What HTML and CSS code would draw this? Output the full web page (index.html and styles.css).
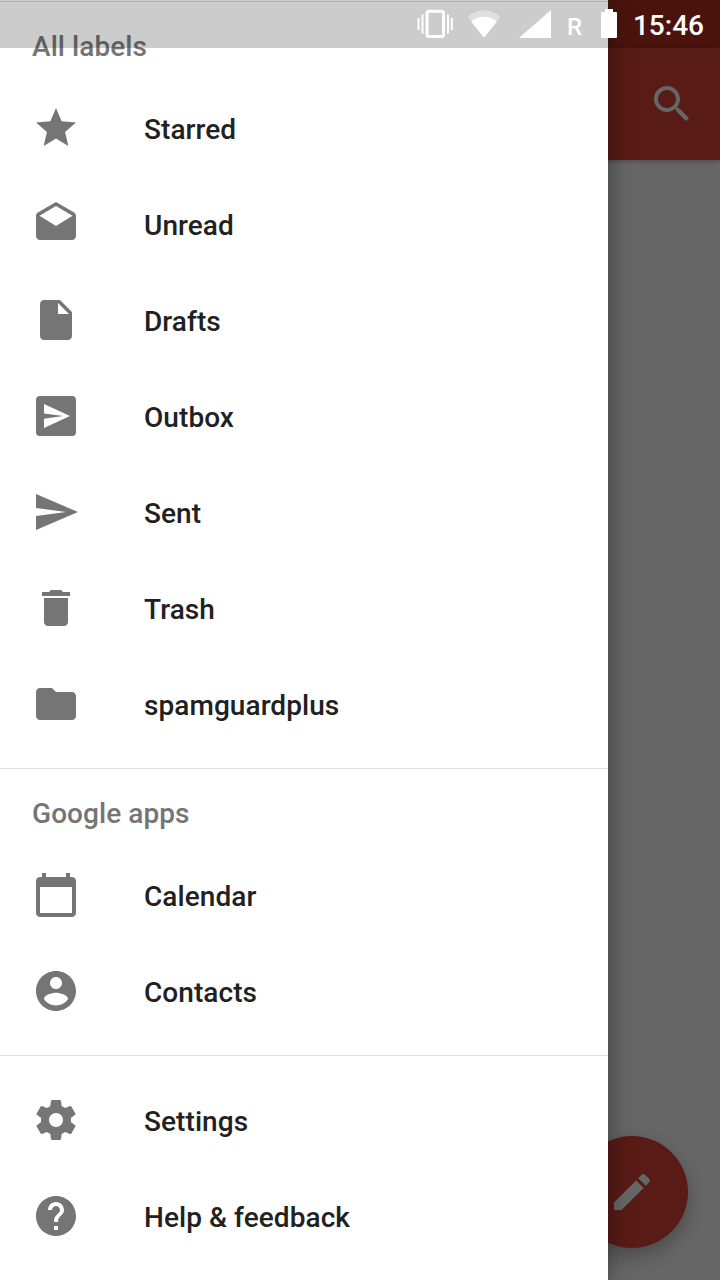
FILE: index.html
```html
<!DOCTYPE html>
<html lang="en">
<head>
	<meta charset="UTF-8">
	<title>Gmail</title>
	<link rel="stylesheet" href="styles.css">
</head>
<body>
	<div class="screen">
		<div class="app">
			<div class="app-status"></div>
			<div class="toolbar">
				<svg class="icon" viewBox="0 0 24 24"><path d="M15.5 14h-.79l-.28-.27C15.41 12.59 16 11.11 16 9.5 16 5.91 13.09 3 9.5 3S3 5.91 3 9.5 5.91 16 9.5 16c1.61 0 3.09-.59 4.23-1.57l.27.28v.79l5 4.99L20.49 19l-4.99-5zm-6 0C7.01 14 5 11.99 5 9.5S7.01 5 9.5 5 14 7.01 14 9.5 11.99 14 9.5 14z"/></svg>
			</div>
			<a href="#" class="fab">
				<svg class="icon" viewBox="0 0 24 24"><path d="M3 17.25V21h3.75L17.81 9.94l-3.75-3.75L3 17.25zM20.71 7.04c.39-.39.39-1.02 0-1.41l-2.34-2.34c-.39-.39-1.02-.39-1.41 0l-1.83 1.83 3.75 3.75 1.83-1.83z"/></svg>
			</a>
		</div>
		<div class="scrim"></div>

		<nav class="drawer">
			<section class="group first">
				<h2>All labels</h2>
				<a href="#" class="item">
					<svg class="icon" viewBox="0 0 24 24"><path d="M12 17.27L18.18 21l-1.64-7.03L22 9.24l-7.19-.61L12 2 9.19 8.63 2 9.24l5.46 4.73L5.82 21z"/></svg>
					<span>Starred</span>
				</a>
				<a href="#" class="item">
					<svg class="icon" viewBox="0 0 24 24"><path d="M21.99 8c0-.72-.37-1.35-.94-1.7L12 1 2.95 6.3C2.38 6.65 2 7.28 2 8v10c0 1.1.9 2 2 2h16c1.1 0 2-.9 2-2l-.01-10zM12 13L3.74 7.84 12 3l8.26 4.84L12 13z"/></svg>
					<span>Unread</span>
				</a>
				<a href="#" class="item">
					<svg class="icon" viewBox="0 0 24 24"><path d="M6 2c-1.1 0-1.99.9-1.99 2L4 20c0 1.1.89 2 1.99 2H18c1.1 0 2-.9 2-2V8l-6-6H6zm7 7V3.5L18.5 9H13z"/></svg>
					<span>Drafts</span>
				</a>
				<a href="#" class="item">
					<svg class="icon" viewBox="0 0 24 24"><path fill-rule="evenodd" d="M3.8 2h16.4c1 0 1.8.8 1.8 1.8v16.4c0 1-.8 1.8-1.8 1.8H3.8c-1 0-1.8-.8-1.8-1.8V3.8C2 2.8 2.8 2 3.8 2zM6 6v4.7l9.6 1.3L6 13.4V18l13-6z"/></svg>
					<span>Outbox</span>
				</a>
				<a href="#" class="item">
					<svg class="icon" viewBox="0 0 24 24"><path d="M2.01 21L23 12 2.01 3 2 10l15 2-15 2z"/></svg>
					<span>Sent</span>
				</a>
				<a href="#" class="item">
					<svg class="icon" viewBox="0 0 24 24"><path d="M6 19c0 1.1.9 2 2 2h8c1.1 0 2-.9 2-2V7H6v12zM19 4h-3.5l-1-1h-5l-1 1H5v2h14V4z"/></svg>
					<span>Trash</span>
				</a>
				<a href="#" class="item">
					<svg class="icon" viewBox="0 0 24 24"><path d="M10 4H4c-1.1 0-1.99.9-1.99 2L2 18c0 1.1.9 2 2 2h16c1.1 0 2-.9 2-2V8c0-1.1-.9-2-2-2h-8l-2-2z"/></svg>
					<span>spamguardplus</span>
				</a>
			</section>
			<section class="group">
				<h2>Google apps</h2>
				<a href="#" class="item">
					<svg class="icon" viewBox="0 0 24 24"><path d="M20 3h-1V1h-2v2H7V1H5v2H4c-1.1 0-2 .9-2 2v16c0 1.1.9 2 2 2h16c1.1 0 2-.9 2-2V5c0-1.1-.9-2-2-2zm0 18H4V8h16v13z"/></svg>
					<span>Calendar</span>
				</a>
				<a href="#" class="item">
					<svg class="icon" viewBox="0 0 24 24"><path d="M12 2C6.48 2 2 6.48 2 12s4.48 10 10 10 10-4.48 10-10S17.52 2 12 2zm0 3c1.66 0 3 1.34 3 3s-1.34 3-3 3-3-1.34-3-3 1.34-3 3-3zm0 14.2c-2.5 0-4.71-1.28-6-3.22.03-1.99 4-3.08 6-3.08 1.99 0 5.97 1.09 6 3.08-1.29 1.94-3.5 3.22-6 3.22z"/></svg>
					<span>Contacts</span>
				</a>
			</section>
			<section class="group last">
				<a href="#" class="item">
					<svg class="icon" viewBox="0 0 24 24"><path d="M19.43 12.98c.04-.32.07-.64.07-.98s-.03-.66-.07-.98l2.11-1.65c.19-.15.24-.42.12-.64l-2-3.46c-.12-.22-.39-.3-.61-.22l-2.49 1c-.52-.4-1.08-.73-1.69-.98l-.38-2.65C14.46 2.18 14.25 2 14 2h-4c-.25 0-.46.18-.49.42l-.38 2.65c-.61.25-1.17.59-1.69.98l-2.49-1c-.23-.09-.49 0-.61.22l-2 3.46c-.13.22-.07.49.12.64l2.11 1.65c-.04.32-.07.65-.07.98s.03.66.07.98l-2.11 1.65c-.19.15-.24.42-.12.64l2 3.46c.12.22.39.3.61.22l2.49-1c.52.4 1.08.73 1.69.98l.38 2.65c.03.24.24.42.49.42h4c.25 0 .46-.18.49-.42l.38-2.65c.61-.25 1.17-.59 1.69-.98l2.49 1c.23.09.49 0 .61-.22l2-3.46c.12-.22.07-.49-.12-.64l-2.11-1.65zM12 15.5c-1.93 0-3.5-1.57-3.5-3.5s1.57-3.5 3.5-3.5 3.5 1.57 3.5 3.5-1.57 3.5-3.5 3.5z"/></svg>
					<span>Settings</span>
				</a>
				<a href="#" class="item">
					<svg class="icon" viewBox="0 0 24 24"><path d="M12 2C6.48 2 2 6.48 2 12s4.48 10 10 10 10-4.48 10-10S17.52 2 12 2zm1 17h-2v-2h2v2zm2.07-7.75l-.9.92C13.45 12.9 13 13.5 13 15h-2v-.5c0-1.1.45-2.1 1.17-2.83l1.24-1.26c.37-.36.59-.86.59-1.41 0-1.1-.9-2-2-2s-2 .9-2 2H8c0-2.21 1.79-4 4-4s4 1.79 4 4c0 .88-.36 1.68-.93 2.25z"/></svg>
					<span>Help &amp; feedback</span>
				</a>
			</section>
			<div class="drawer-shade"></div>
		</nav>

		<div class="status">
			<svg class="vibrate" width="36" height="48" viewBox="0 0 36 48">
				<rect x="10" y="11.2" width="16.5" height="25.3" rx="2" fill="none" stroke="#fff" stroke-width="3"/>
				<path d="M1.5 18v12M5.5 14.5v19M31 14.5v19M34.8 18v12" fill="none" stroke="#fff" stroke-width="2"/>
			</svg>
			<svg class="wifi" width="34" height="48" viewBox="0 0 34 48">
				<path d="M17 37.5L0.5 16.5Q17 4 33.5 16.5z" fill="#fff" opacity=".4"/>
				<path d="M17 37.5L4 21.5Q17 12 30 21.5z" fill="#fff"/>
			</svg>
			<svg class="signal" width="32" height="48" viewBox="0 0 32 48"><path d="M0 38L32 10v28z" fill="#fff"/></svg>
			<span class="roaming">R</span>
			<svg class="battery" width="16" height="48" viewBox="0 0 16 48"><path d="M4 9h8v3h3q1 0 1 1v24q0 1-1 1H1q-1 0-1-1V13q0-1 1-1h3z" fill="#fff"/></svg>
			<span class="time">15:46</span>
		</div>
	</div>
</body>
</html>
```

FILE: styles.css
```css
*{
	margin: 0;
	padding: 0;
	box-sizing: border-box;
	text-decoration: none;
}
body {
	font-family: Roboto, "Liberation Sans", sans-serif;
	font-weight: 500;
}
.screen {
	position: relative;
	width: 720px;
	height: 1280px;
	overflow: hidden;
}
.icon {
	display: block;
	flex: none;
	width: 48px;
	height: 48px;
	fill: currentColor;
}

/* inbox behind the drawer */
.app {
	height: 1280px;
	background: #fff;
}
.app-status {
	height: 48px;
	background: #b93221;
}
.toolbar {
	display: flex;
	align-items: center;
	justify-content: flex-end;
	height: 112px;
	padding: 0 24px;
	background: #db4437;
	color: #fff;
	box-shadow: 0 1px 5px rgba(0,0,0,.3);
}
.fab {
	position: absolute;
	right: 32px;
	bottom: 32px;
	display: flex;
	align-items: center;
	justify-content: center;
	width: 112px;
	height: 112px;
	border-radius: 50%;
	background: #db4437;
	color: #fff;
	box-shadow: 0 8px 20px rgba(0,0,0,.28);
}
.scrim {
	position: absolute;
	top: 0;
	left: 0;
	width: 100%;
	height: 100%;
	background: rgba(0,0,0,.6);
}

/* drawer */
.drawer {
	position: absolute;
	top: 0;
	left: 0;
	width: 608px;
	height: 1280px;
	padding-top: 1px;
	background: #fff;
	box-shadow: 0 0 22px rgba(0,0,0,.4);
}
.drawer-shade {
	position: absolute;
	top: 0;
	left: 0;
	width: 100%;
	height: 48px;
	background: rgba(0,0,0,.2);
}
.group {
	padding-bottom: 16px;
	border-top: 1px solid #e0e0e0;
}
.group.last {
	padding-top: 16px;
}
.group h2 {
	height: 78px;
	padding-left: 32px;
	line-height: 90px;
	font-size: 28px;
	font-weight: 500;
	letter-spacing: .07px;
	color: #757575;
}
.item {
	display: flex;
	align-items: center;
	height: 96px;
	padding: 0 32px;
	font-size: 28px;
	letter-spacing: .07px;
	color: #212121;
}
.item .icon {
	margin-right: 64px;
	color: #757575;
}
.item span {
	padding-top: 2px;
}

/* status bar */
.status {
	position: absolute;
	top: 0;
	right: 0;
	display: flex;
	align-items: center;
	height: 48px;
	padding-right: 16px;
	color: #fff;
}
.wifi {
	margin-left: 14px;
}
.signal {
	margin-left: 18px;
}
.roaming {
	width: 17px;
	margin: 5px 17px 0 16px;
	font-size: 24px;
}
.time {
	margin-left: 16px;
	padding-top: 2px;
	font-size: 28px;
}
```
